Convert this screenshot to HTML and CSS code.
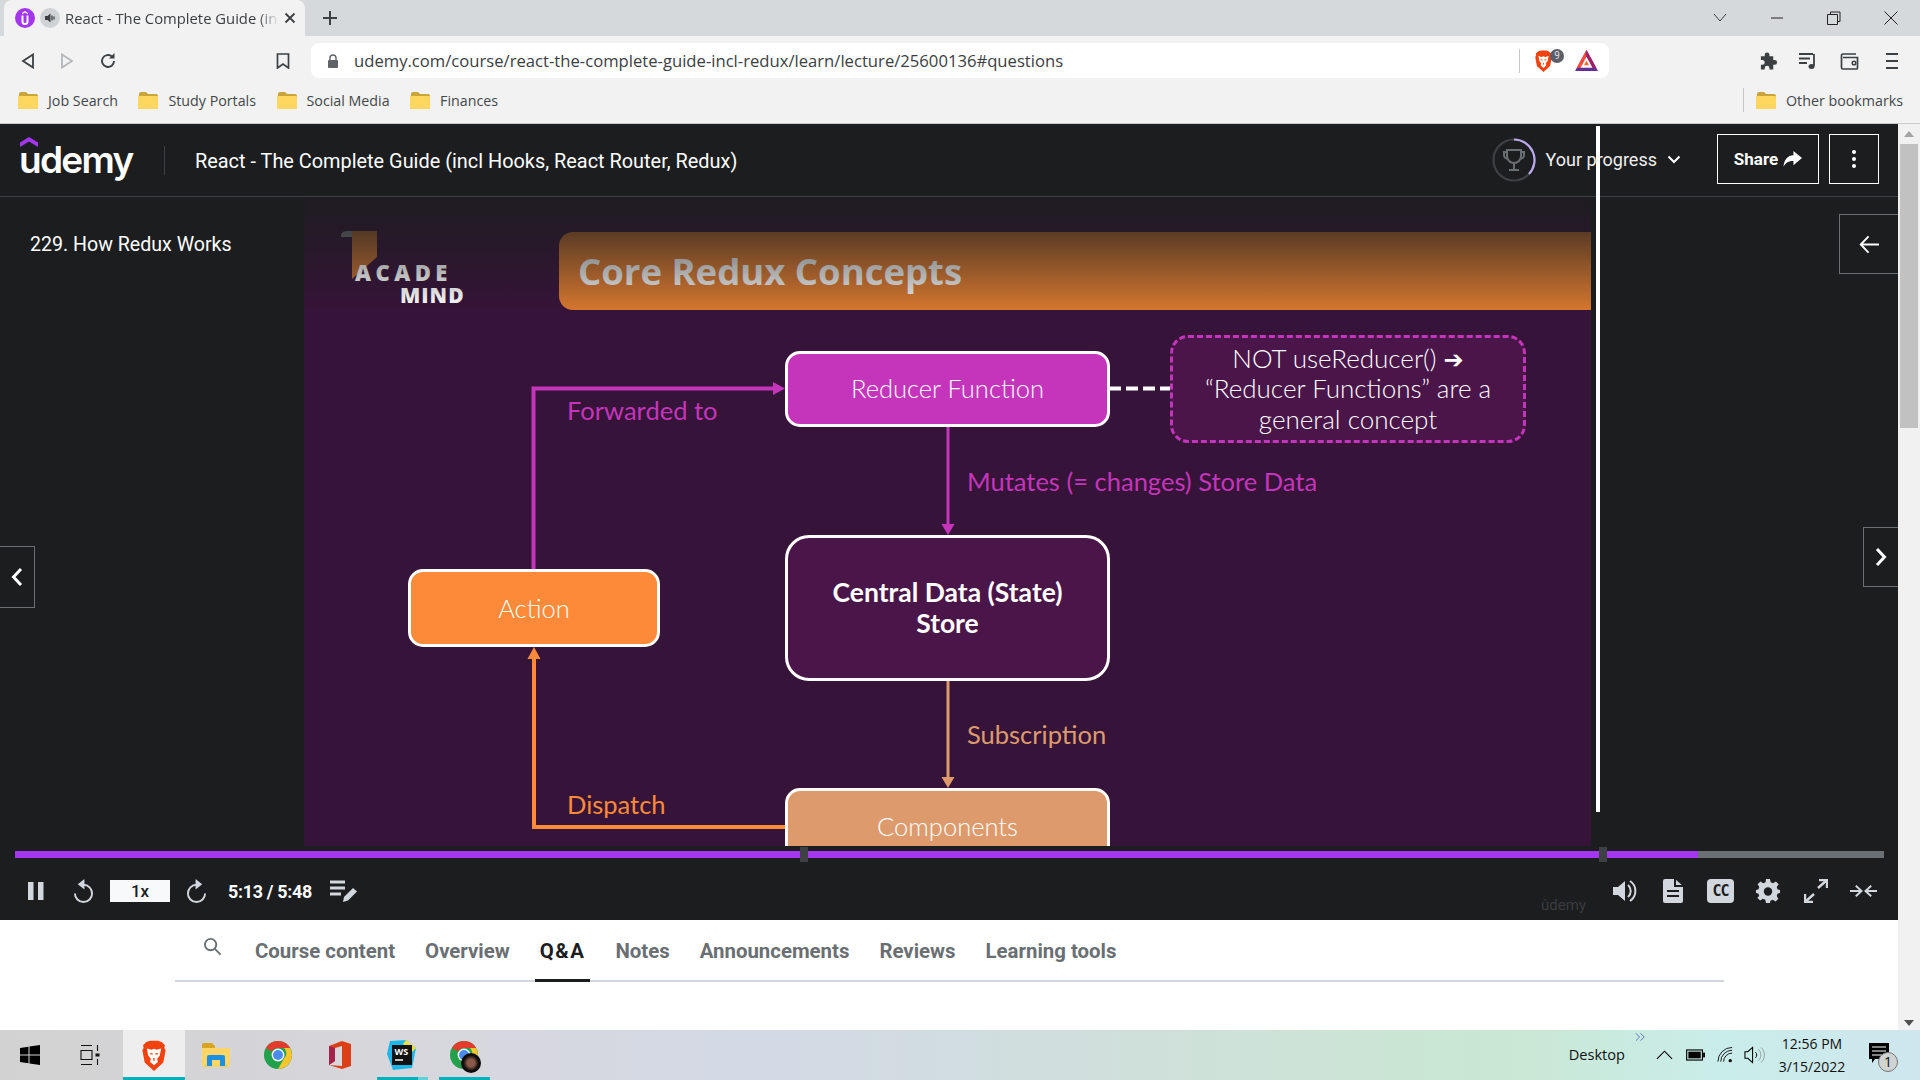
FILE: index.html
```html
<!DOCTYPE html>
<html lang="en">
<head>
<meta charset="utf-8">
<title>React - The Complete Guide</title>
<link rel="stylesheet" href="styles.css">
</head>
<body>
<div class="app">
  <div class="tabstrip">
    <div class="tab">
      <span class="favicon"><svg viewBox="0 0 20 20" width="20" height="20"><circle cx="10" cy="10" r="10" fill="#a435f0"/><path d="M6.500 7.500v6a3.500 3.500 0 0 0 7 0v-6h-2v6a1.500 1.500 0 0 1-3 0v-6z" fill="#fff"/><path d="M10 3l3 2v1.400l-3-2-3 2V5z" fill="#fff"/></svg></span>
      <span class="tabaudio"><svg viewBox="0 0 20 20" width="20" height="20"><circle cx="10" cy="10" r="10" fill="#d0d3d6"/><path d="M5 8h2.500L10.500 5.500v9L7.500 12H5z" fill="#3c4043"/><path d="M12 7.500v5M14 8.500v3" stroke="#3c4043" stroke-width="1.300"/></svg></span>
      <span class="tabtitle">React - The Complete Guide (in</span>
      <svg class="tabclose" viewBox="0 0 12 12" width="12" height="12"><path d="M1.500 1.500l9 9M10.500 1.500l-9 9" stroke="#3c4043" stroke-width="1.800"/></svg>
    </div>
    <svg class="newtab" viewBox="0 0 16 16" width="16" height="16"><path d="M8 1v14M1 8h14" stroke="#3c4043" stroke-width="2"/></svg>
    <div class="winctl">
      <svg viewBox="0 0 14 10" width="14" height="10"><path d="M1 1l6 7 6-7" fill="none" stroke="#3c4043"/></svg>
      <svg viewBox="0 0 14 10" width="14" height="10"><path d="M1 5h12" stroke="#222" stroke-width="1"/></svg>
      <svg viewBox="0 0 14 14" width="14" height="14"><path d="M3.500 3.500V1h9.500v9.500h-2.500M.5 3.500h10v10H.5z" fill="none" stroke="#222"/></svg>
      <svg viewBox="0 0 14 14" width="14" height="14"><path d="M.5.5l13 13M13.500.5l-13 13" stroke="#222"/></svg>
    </div>
  </div>

  <div class="toolbar">
    <div class="navbtns">
      <svg viewBox="0 0 14 16" width="14" height="16"><path d="M12 1.500v13L2 8z" fill="none" stroke="#3c4043" stroke-width="1.800"/></svg>
      <svg viewBox="0 0 14 16" width="14" height="16"><path d="M2 1.500v13L12 8z" fill="none" stroke="#b5b8bb" stroke-width="1.800"/></svg>
      <svg viewBox="0 0 18 18" width="18" height="18"><path d="M15 9a6 6 0 1 1-2-4.500" fill="none" stroke="#3c4043" stroke-width="1.900"/><path d="M15.500 1v5.500H10z" fill="#3c4043"/></svg>
    </div>
    <svg class="bookmarkbtn" viewBox="0 0 14 16" width="14" height="16"><path d="M1.500 1h11v14L7 11l-5.500 4z" fill="none" stroke="#3c4043" stroke-width="1.700"/></svg>
    <div class="omnibox">
      <svg class="lock" viewBox="0 0 12 14" width="12" height="14"><path d="M3 6V4a3 3 0 0 1 6 0v2" fill="none" stroke="#5f6368" stroke-width="1.400"/><rect x="1" y="6" width="10" height="8" rx="1" fill="#5f6368"/></svg>
      <span class="url">udemy.com/course/react-the-complete-guide-incl-redux/learn/lecture/25600136#questions</span>
      <span class="omnidiv"></span>
      <span class="shield"><svg viewBox="0 0 20 24" width="19" height="22"><use href="#braveicon"/></svg><span class="shieldcount">9</span></span>
      <svg class="bat" viewBox="0 0 24 22" width="23" height="21"><path d="M12 0l12 22H0z" fill="#662d91"/><path d="M12 0L1.800 18.700h4L12 7z" fill="#ff4a36"/><path d="M12 0l10.200 18.700h-4L12 7z" fill="#9e1f63"/><path d="M12 7l6.200 11.700H5.800z" fill="#fff"/><path d="M12 11l2.600 5H9.400z" fill="#ff6a2f"/></svg>
    </div>
    <div class="exticons">
      <svg viewBox="0 0 20 20" width="19" height="20"><path d="M2 5h4V3.500a2.500 2.500 0 0 1 5 0V5h4v4h1.500a2.500 2.500 0 0 1 0 5H15v5h-4v-1.500a2.500 2.500 0 0 0-5 0V19H2v-5h1.500a2.500 2.500 0 0 0 0-5H2z" fill="#3c4043"/></svg>
      <svg class="ext-queue" viewBox="0 0 20 20" width="20" height="20"><path d="M1 3h14M1 7.500h11M1 12h8" stroke="#3c4043" stroke-width="1.800"/><path d="M16 3v12" stroke="#3c4043" stroke-width="1.800"/><ellipse cx="13.500" cy="15.500" rx="3" ry="2.500" fill="#3c4043"/></svg>
      <svg class="ext-wallet" viewBox="0 0 20 20" width="20" height="20"><path d="M16 3H3a1.500 1.500 0 0 0-1.500 1.500v12A1.500 1.500 0 0 0 3 18h13.500a1 1 0 0 0 1-1V6.500H3" fill="none" stroke="#3c4043" stroke-width="1.700"/><circle cx="14" cy="12" r="1.800" fill="none" stroke="#3c4043" stroke-width="1.500"/></svg>
      <svg class="ext-menu" viewBox="0 0 12 16" width="12" height="16"><path d="M0 1h12M0 8h12M0 15h12" stroke="#3c4043" stroke-width="2"/></svg>
    </div>
  </div>

  <div class="bookmarks">
    <div class="bm"><svg class="folder" viewBox="0 0 20 18" width="20" height="18"><use href="#foldericon"/></svg>Job Search</div>
    <div class="bm"><svg class="folder" viewBox="0 0 20 18" width="20" height="18"><use href="#foldericon"/></svg>Study Portals</div>
    <div class="bm"><svg class="folder" viewBox="0 0 20 18" width="20" height="18"><use href="#foldericon"/></svg>Social Media</div>
    <div class="bm"><svg class="folder" viewBox="0 0 20 18" width="20" height="18"><use href="#foldericon"/></svg>Finances</div>
    <div class="bm bm-other"><svg class="folder" viewBox="0 0 20 18" width="20" height="18"><use href="#foldericon"/></svg>Other bookmarks</div>
  </div>

  <div class="page">
    <main class="content">
      <section class="player">
        <div class="slide">
          <div class="slide-title">Core Redux Concepts</div>
          <div class="am-logo">
            <svg class="am-ribbon" viewBox="0 0 36 48" width="36" height="48"><path d="M0 6a5 5 0 0 1 5-6h6v6z" fill="#8d8d8f"/><path d="M11 0h25v26L11 48z" fill="#c36f30"/></svg>
            <span class="am-1">ACADE</span>
            <span class="am-2">MIND</span>
          </div>
          <svg class="wires" viewBox="0 0 1287 722" width="1287" height="722">
            <path d="M229.500 446V264.500H472" fill="none" stroke="#c535bb" stroke-width="4"/>
            <path d="M469 258l12 6.500-12 6.500z" fill="#c535bb"/>
            <path d="M644 303v100" stroke="#c535bb" stroke-width="3"/>
            <path d="M637.500 400h13L644 411z" fill="#c535bb"/>
            <path d="M644 557v100" stroke="#dd9b6d" stroke-width="3"/>
            <path d="M637.500 653h13L644 664z" fill="#dd9b6d"/>
            <path d="M482 703H230V532" fill="none" stroke="#fc8a38" stroke-width="4"/>
            <path d="M223.500 535h13L230 523z" fill="#fc8a38"/>
            <path d="M805 264.500h62" stroke="#fff" stroke-width="4" stroke-dasharray="12 5"/>
          </svg>
          <div class="node node-reducer">Reducer Function</div>
          <div class="note">NOT useReducer() <span class="note-arrow">➔</span><br>“Reducer Functions” are a<br>general concept</div>
          <div class="edge edge-forward">Forwarded to</div>
          <div class="edge edge-mutates">Mutates (= changes) Store Data</div>
          <div class="node node-action">Action</div>
          <div class="node node-store">Central Data (State)<br>Store</div>
          <div class="edge edge-sub">Subscription</div>
          <div class="edge edge-dispatch">Dispatch</div>
          <div class="node node-comp">Components</div>
        </div>
        <div class="slide-shade"></div>
        <div class="cursor-line"></div>

        <header class="course-head">
          <div class="logo"><svg class="logo-mark" viewBox="0 0 18 10" width="18" height="10"><path d="M9 0l9 5.500V10L9 4.500 0 10V5.500z" fill="#a435f0"/></svg><span class="logo-word">udemy</span></div>
          <span class="head-div"></span>
          <div class="course-title">React - The Complete Guide (incl Hooks, React Router, Redux)</div>
          <svg class="ring" viewBox="0 0 44 44" width="44" height="44"><circle cx="22" cy="22" r="20.500" fill="none" stroke="#3e4143" stroke-width="2.200"/><path d="M22 1.500A20.500 20.500 0 0 1 37 36" fill="none" stroke="#b9a9ec" stroke-width="2.200"/><path d="M15 12h14v6a7 7 0 0 1-14 0zM15 14h-3v3a4 4 0 0 0 4 4M29 14h3v3a4 4 0 0 1-4 4M22 25v6M17 32h10" fill="none" stroke="#6a6f73" stroke-width="2"/></svg>
          <div class="progress-label">Your progress</div>
          <svg class="chev" viewBox="0 0 14 9" width="14" height="9"><path d="M1.500 1.500L7 7l5.500-5.500" fill="none" stroke="#fff" stroke-width="2"/></svg>
          <button class="head-btn share">Share <svg viewBox="0 0 20 18" width="19" height="17"><path d="M11 0l9 7.500-9 7.500v-4.500c-5 0-8 1.500-10.500 6C1 10 4 5 11 4.500z" fill="#fff"/></svg></button>
          <button class="head-btn more"><svg viewBox="0 0 4 18" width="4" height="18"><circle cx="2" cy="2" r="2" fill="#fff"/><circle cx="2" cy="9" r="2" fill="#fff"/><circle cx="2" cy="16" r="2" fill="#fff"/></svg></button>
        </header>

        <div class="stage">
          <div class="lecture-name">229. How Redux Works</div>
          <button class="sidebtn back"><svg viewBox="0 0 22 20" width="21" height="19"><path d="M21 10H2M10 1.500L1.800 10l8.200 8.500" fill="none" stroke="#fff" stroke-width="2"/></svg></button>
          <button class="navarrow prev"><svg viewBox="0 0 12 20" width="12" height="20"><path d="M10 2L2.500 10l7.500 8" fill="none" stroke="#fff" stroke-width="3"/></svg></button>
          <button class="navarrow next"><svg viewBox="0 0 12 20" width="12" height="20"><path d="M2 2l7.500 8L2 18" fill="none" stroke="#fff" stroke-width="3"/></svg></button>
        </div>

        <div class="seek">
          <div class="seek-fill"></div>
          <span class="seek-mark mark-a"></span>
          <span class="seek-mark mark-b"></span>
        </div>

        <div class="controls">
          <svg class="ci ci-pause" viewBox="0 0 16 18" width="16" height="18"><path d="M0 0h5.500v18H0zM10 0h5.500v18H10z" fill="#d1d7dc"/></svg>
          <svg class="ci ci-back" viewBox="0 0 22 26" width="21" height="25"><path d="M11 6a9 9 0 1 1-9 9" fill="none" stroke="#d1d7dc" stroke-width="2"/><path d="M12 0v11L5 5.500z" fill="#d1d7dc"/></svg>
          <div class="speed">1x</div>
          <svg class="ci ci-fwd" viewBox="0 0 22 26" width="21" height="25"><path d="M11 6a9 9 0 1 0 9 9" fill="none" stroke="#d1d7dc" stroke-width="2"/><path d="M10 0v11l7-5.500z" fill="#d1d7dc"/></svg>
          <div class="time">5:13 / 5:48</div>
          <svg class="ci ci-notes" viewBox="0 0 28 22" width="28" height="22"><path d="M0 2h15M0 8h15M0 14h11" stroke="#d1d7dc" stroke-width="3"/><path d="M13 22l1-5 9-9 4 3.500-9 9z" fill="#d1d7dc"/></svg>
          <div class="ctl-right">
            <span class="cell"><svg viewBox="0 0 24 24" width="24" height="24"><path d="M0 8h5l7-6v20l-7-6H0z" fill="#d1d7dc"/><path d="M15 6a8 8 0 0 1 0 12M17 2a12 12 0 0 1 0 20" fill="none" stroke="#d1d7dc" stroke-width="2"/></svg></span>
            <span class="cell"><svg viewBox="0 0 20 24" width="20" height="24"><path d="M2 0h10l8 7v15a2 2 0 0 1-2 2H2a2 2 0 0 1-2-2V2a2 2 0 0 1 2-2z" fill="#d1d7dc"/><path d="M12 0v7h8M4 12h12M4 17h12" fill="none" stroke="#1c1d1f" stroke-width="2"/></svg></span>
            <span class="cell"><span class="cc">CC</span></span>
            <span class="cell"><svg viewBox="0 0 24 24" width="24" height="24"><path d="M10 0h4l.7 3.300 2.400 1 2.800-1.800 2.800 2.800L20.700 8l1 2.400L24 11v3l-2.300.6-1 2.400 1.700 2.700-2.800 2.800-2.800-1.800-2.400 1L14 24h-4l-.7-3.300-2.400-1-2.800 1.800-2.800-2.800L3.300 17l-1-2.400L0 14v-3l2.300-.6 1-2.400-1.700-2.700 2.800-2.800 2.800 1.800 2.400-1z" fill="#d1d7dc"/><circle cx="12" cy="12.500" r="4.200" fill="#1c1d1f"/></svg></span>
            <span class="cell"><svg viewBox="0 0 24 24" width="24" height="24"><path d="M14 9l9-8M15 1h8v8M10 15l-9 8M1 15v8h8" fill="none" stroke="#d1d7dc" stroke-width="2.400"/></svg></span>
            <span class="cell"><svg viewBox="0 0 28 14" width="27" height="14"><path d="M0 7h11M6 1.500L12 7l-6 5.500M28 7H17M22 1.500L16 7l6 5.500" fill="none" stroke="#d1d7dc" stroke-width="2"/></svg></span>
          </div>
        </div>
        <div class="watermark">ûdemy</div>
      </section>

      <nav class="lecture-tabs">
        <svg class="tab-search" viewBox="0 0 20 20" width="19" height="19"><circle cx="8" cy="8" r="6" fill="none" stroke="#6a6f73" stroke-width="2"/><path d="M12.500 12.500l6 6" stroke="#6a6f73" stroke-width="2"/></svg>
        <a class="lt">Course content</a>
        <a class="lt">Overview</a>
        <a class="lt lt-active">Q&amp;A</a>
        <a class="lt">Notes</a>
        <a class="lt">Announcements</a>
        <a class="lt">Reviews</a>
        <a class="lt">Learning tools</a>
      </nav>
    </main>
    <aside class="scrollbar">
      <svg viewBox="0 0 10 6" width="10" height="6"><path d="M5 0l5 6H0z" fill="#a3a3a3"/></svg>
      <div class="thumb"></div>
      <svg class="scroll-down" viewBox="0 0 10 6" width="10" height="6"><path d="M0 0h10L5 6z" fill="#505050"/></svg>
    </aside>
  </div>

  <footer class="taskbar">
    <svg class="tb-win" viewBox="0 0 20 20" width="20" height="20"><path d="M0 3l8.500-1.200v7.700H0zM9.500 1.600L20 0v9.500H9.500zM0 10.500h8.500v7.700L0 17zM9.500 10.500H20V20L9.500 18.400z" fill="#000"/></svg>
    <svg class="tb-view" viewBox="0 0 20 20" width="20" height="20"><path d="M1 .5h11M1 19.500h11M1 5.500h11v9H1zM17.500 0v6M17.500 14v6" fill="none" stroke="#111" stroke-width="1.100"/><rect x="15.500" y="8.500" width="4" height="3" fill="#111"/></svg>
    <div class="tb-app tb-active"><svg viewBox="0 0 20 24" width="26" height="31"><use href="#braveicon"/></svg></div>
    <div class="tb-app"><svg viewBox="0 0 28 24" width="28" height="24"><path d="M0 2a2 2 0 0 1 2-2h8l3 3v2H0z" fill="#d9a520"/><path d="M0 5h28v18a1 1 0 0 1-1 1H1a1 1 0 0 1-1-1z" fill="#fbd567"/><path d="M5 23v-9a2 2 0 0 1 2-2h14a2 2 0 0 1 2 2v9h-5v-6h-8v6z" fill="#1c8fe0"/></svg></div>
    <div class="tb-app"><svg class="chrome" viewBox="0 0 28 28" width="28" height="28"><use href="#chromeicon"/></svg></div>
    <div class="tb-app"><svg viewBox="0 0 24 28" width="24" height="28"><path d="M14 0l9 3v22l-9 3-13-4 13 1V5L7 7v13l-6 4V5z" fill="#dc3e15"/><path d="M1 5l6 2v13l-6 4z" fill="#a6224e"/></svg></div>
    <div class="tb-app tb-ws"><svg viewBox="0 0 30 30" width="30" height="30"><path d="M3 1l16-1 10 8-4 20-19 2L0 14z" fill="#1db6e8"/><path d="M19 0l10 8-5 5-8-9z" fill="#f5e13d"/><rect x="5" y="5" width="20" height="20" fill="#111"/><path d="M8 20h8" stroke="#fff" stroke-width="1.500"/><text x="7.500" y="15" class="ws-text">WS</text></svg></div>
    <div class="tb-app tb-chrome2"><svg class="chrome" viewBox="0 0 28 28" width="28" height="28"><use href="#chromeicon"/></svg><span class="avatar"></span></div>
    <span class="tb-spacer"></span>
    <span class="tb-desktop">Desktop</span>
    <svg class="tb-more" viewBox="0 0 12 10" width="11" height="10"><path d="M1 1l4 4-4 4M6 1l4 4-4 4" fill="none" stroke="#5a68b0"/></svg>
    <svg class="tb-caret" viewBox="0 0 18 10" width="17" height="10"><path d="M1 9l8-8 8 8" fill="none" stroke="#000" stroke-width="1.200"/></svg>
    <svg class="tb-batt" viewBox="0 0 20 12" width="19" height="12"><rect x=".7" y=".7" width="16.600" height="10.600" fill="none" stroke="#000" stroke-width="1.200"/><rect x="2.500" y="2.500" width="13" height="7" fill="#000"/><rect x="18" y="3.500" width="2" height="5" fill="#000"/></svg>
    <svg class="tb-wifi" viewBox="0 0 18 18" width="17" height="18"><path d="M1 16A15 15 0 0 1 16 1M4 16A12 12 0 0 1 16 4M7 16a9 9 0 0 1 9-9" fill="none" stroke="#111" stroke-width="1"/><circle cx="14" cy="15" r="1.800" fill="#111"/></svg>
    <svg class="tb-vol" viewBox="0 0 22 20" width="21" height="20"><path d="M1 6.500h3L9 2v16l-5-4.500H1z" fill="none" stroke="#000" stroke-width="1.100"/><path d="M12 7a4 4 0 0 1 0 6" fill="none" stroke="#000"/><path d="M15 4a8 8 0 0 1 0 12M18 2a11 11 0 0 1 0 16" fill="none" stroke="#9aa09e"/></svg>
    <div class="tb-clock"><span>12:56 PM</span><span>3/15/2022</span></div>
    <div class="tb-notif"><svg viewBox="0 0 20 20" width="20" height="20"><path d="M0 0h20v16H6l-3 4v-4H0z" fill="#000"/><path d="M3 4h14M3 8h14M3 12h10" stroke="#fff" stroke-width="1.200"/></svg><span class="tb-badge">1</span></div>
  </footer>
</div>

<svg class="defs" width="0" height="0">
  <defs>
    <g id="foldericon">
      <path d="M1 3a2 2 0 0 1 2-2h5l2 2h8a2 2 0 0 1 2 2v11a2 2 0 0 1-2 2H2a2 2 0 0 1-2-2z" fill="#c9a43d"/>
      <path d="M0 6a1 1 0 0 1 1-1h18a1 1 0 0 1 1 1v10a2 2 0 0 1-2 2H2a2 2 0 0 1-2-2z" fill="#ffd75f"/>
    </g>
    <g id="braveicon">
      <path d="M4 1.500L7 .5h6l3 1 2.500 2.500-.5 2 1 2-1.800 9.500L10 24l-7.200-6.500L1 8l1-2-.5-2z" fill="#f4420e"/>
      <path d="M4.500 6.500L8 7.500l2-.8 2 .8 3.500-1-1 5.500-2 2.500.5 2.500-3 2.500-3-2.500.5-2.500-2-2.500z" fill="#fff"/>
      <path d="M7 10.500l2 .5M13 10.500l-2 .5M10 14v2" stroke="#f4420e" stroke-width="1"/>
    </g>
    <g id="chromeicon">
      <circle cx="14" cy="14" r="14" fill="#22a04c"/>
      <path d="M14 0a14 14 0 0 1 12.100 7H14a7 7 0 0 0-6.100 3.500L1.900 7A14 14 0 0 1 14 0z" fill="#e33b2e"/>
      <path d="M26.100 7A14 14 0 0 1 14 28l6-10.500A7 7 0 0 0 20 7z" fill="#fbc52c"/>
      <circle cx="14" cy="14" r="6.400" fill="#fff"/>
      <circle cx="14" cy="14" r="5" fill="#4b8bf0"/>
    </g>
  </defs>
</svg>
</body>
</html>
```

FILE: styles.css
```css
* { box-sizing: border-box; }
html, body { margin: 0; padding: 0; width: 1920px; height: 1080px; overflow: hidden; }
body { font-family: "Roboto", "Liberation Sans", sans-serif; background: #fff; color: #1c1d1f; }
button { font: inherit; padding: 0; background: none; }
svg { display: block; flex: none; }
.defs { position: absolute; }
.app { display: flex; flex-direction: column; width: 1920px; height: 1080px; }

/* browser chrome */
.tabstrip { flex: none; height: 36px; background: #d5d9dc; display: flex; align-items: center; padding-left: 4px; }
.tab { width: 301px; height: 36px; background: #f2f2f2; border-radius: 8px 8px 0 0; display: flex; align-items: center; padding-left: 11px; }
.tabaudio { margin-left: 5px; }
.tabtitle { flex: none; margin-left: 5px; width: 214px; white-space: nowrap; font-size: 14.800px; color: #3c4043; font-family: "Open Sans", sans-serif; -webkit-mask-image: linear-gradient(to right, #000 90%, transparent 100%); mask-image: linear-gradient(to right, #000 90%, transparent 100%); }
.tabclose { margin-left: 5px; }
.newtab { margin-left: 17px; }
.winctl { margin-left: auto; display: flex; align-items: center; gap: 43px; padding-right: 22px; }

.toolbar { flex: none; height: 49px; background: #f2f2f2; display: flex; align-items: center; padding-left: 21px; }
.navbtns { display: flex; align-items: center; gap: 25px; }
.bookmarkbtn { margin-left: 159px; }
.omnibox { margin-left: 21px; width: 1298px; height: 35px; background: #fff; border-radius: 8px; display: flex; align-items: center; padding-left: 16px; }
.url { flex: none; margin-left: 15px; font-family: "Open Sans", sans-serif; font-size: 16.650px; color: #3c4043; white-space: nowrap; width: 1165px; }
.omnidiv { width: 1px; height: 24px; background: #c4c7c9; }
.shield { position: relative; margin-left: 14px; display: block; }
.shieldcount { position: absolute; left: 16px; top: -1px; width: 14px; height: 14px; border-radius: 50%; background: #5d5f6b; color: #ddd; font-size: 10px; text-align: center; line-height: 14px; }
.bat { margin-left: 22px; }
.exticons { margin-left: auto; display: flex; align-items: center; padding-right: 22px; }
.ext-queue { margin-left: 20px; }
.ext-wallet { margin-left: 22px; }
.ext-menu { margin-left: 26px; }

.bookmarks { flex: none; height: 39px; background: #f2f2f2; border-bottom: 1px solid #c9cbcd; display: flex; align-items: center; padding: 0 0 8px 18px; gap: 20.500px; font-family: "Open Sans", sans-serif; font-size: 14.250px; color: #44474a; }
.bm { display: flex; align-items: center; gap: 10px; white-space: nowrap; }
.bm-other { margin-left: auto; border-left: 1px solid #c4c7c9; padding-left: 12px; height: 24px; margin-right: 17px; }

/* page */
.page { flex: 1; min-height: 0; display: flex; }
.content { width: 1898px; display: flex; flex-direction: column; background: #fff; }
.scrollbar { width: 22px; background: #f1f1f1; display: flex; flex-direction: column; align-items: center; padding-top: 7px; }
.thumb { width: 18px; height: 284px; background: #c1c1c1; margin-top: 7px; }
.scroll-down { margin-top: auto; margin-bottom: 4px; }

/* player */
.player { position: relative; flex: none; height: 796px; background: #1c1d1f; display: flex; flex-direction: column; overflow: hidden; color: #fff; font-family: "Roboto", sans-serif; }
.slide { position: absolute; left: 304px; top: 0; width: 1287px; height: 722px; background: #361338; font-family: "Lato", sans-serif; font-weight: 300; overflow: hidden; }
.slide-title { position: absolute; left: 255px; top: 108px; width: 1040px; height: 78px; border-radius: 14px 0 0 14px; background: #d4762f; color: #eee; font: 700 36.500px/78px "Open Sans", sans-serif; padding-left: 19px; }
.am-logo { position: absolute; left: 37px; top: 107px; width: 130px; height: 76px; font-family: "Open Sans", sans-serif; font-weight: 800; color: #fff; }
.am-ribbon { position: absolute; left: 0; top: 0; }
.am-1 { position: absolute; left: 14px; top: 31px; font-size: 22px; letter-spacing: 4.500px; line-height: 21px; }
.am-2 { position: absolute; left: 59px; top: 54px; font-size: 21px; letter-spacing: 1px; line-height: 21px; }
.wires { position: absolute; left: 0; top: 0; }
.node { position: absolute; display: flex; align-items: center; justify-content: center; text-align: center; border: 3px solid #fff; border-radius: 15px; color: #fff; font-size: 25.500px; line-height: 31px; }
.node-reducer { left: 481px; top: 227px; width: 325px; height: 76px; padding-bottom: 1px; background: #c535bb; }
.node-action { left: 104px; top: 445px; width: 252px; height: 78px; background: #fc8a38; }
.node-store { left: 481px; top: 411px; width: 325px; height: 146px; background: #4a1649; font-weight: 700; font-size: 26.500px; border-radius: 24px; }
.node-comp { left: 481px; top: 664px; width: 325px; height: 90px; background: #dd9b6d; align-items: flex-start; padding-top: 20px; }
.note { position: absolute; left: 866px; top: 211px; width: 356px; height: 108px; background: #4a1649; border: 3px dashed #c535bb; border-radius: 18px; color: #fff; font-size: 26px; line-height: 30.500px; text-align: center; padding-top: 4.500px; }
.note-arrow { font-family: "DejaVu Sans", sans-serif; font-size: 24px; line-height: 0; font-weight: 700; }
.edge { position: absolute; font-size: 25.500px; line-height: 32px; white-space: nowrap; font-weight: 400; }
.edge-forward { left: 263px; top: 270px; color: #c535bb; }
.edge-mutates { left: 663px; top: 341px; color: #c535bb; }
.edge-sub { left: 663px; top: 594px; color: #dd9b6d; }
.edge-dispatch { left: 263px; top: 664px; color: #fc8a38; }

.slide-shade { position: absolute; left: 304px; top: 0; width: 1287px; height: 796px; background:
  linear-gradient(to bottom, rgba(28,29,31,0) 736px, rgba(28,29,31,.95) 796px),
  linear-gradient(to bottom, #1c1d1f 0, rgba(28,29,31,.92) 72px, rgba(28,29,31,.66) 108px, rgba(28,29,31,0) 186px); pointer-events: none; }
.slide-shade::before { content: ""; position: absolute; left: 0; right: 0; top: 722px; height: 74px; background: #361338; z-index: -1; }
.cursor-line { position: absolute; left: 1596px; top: 2px; width: 4px; height: 686px; background: #fff; z-index: 3; }

.course-head { position: relative; flex: none; height: 73px; display: flex; align-items: center; padding-left: 20px; border-bottom: 1px solid #3e4143; background: #1c1d1f; z-index: 1; }
.logo { position: relative; width: 113px; height: 52px; }
.logo-mark { position: absolute; left: 0; top: 3px; }
.logo-word { position: absolute; left: -1px; top: 0; font: 600 37px/52px "Inter", "Open Sans", sans-serif; letter-spacing: -1.700px; color: #fff; }
.head-div { width: 1px; height: 29px; background: #3e4143; margin-left: 31px; }
.course-title { margin: 2px 0 0 30px; font-size: 19.900px; white-space: nowrap; font-weight: 400; }
.ring { margin-left: auto; }
.progress-label { margin: -2px 0 0 10px; font-size: 18px; color: #f0f0f0; }
.chev { margin: -2px 0 0 10px; }
.head-btn { height: 50px; margin-top: -2px; border: 1.500px solid #fff; color: #fff; display: flex; align-items: center; justify-content: center; font-weight: 700; font-size: 17px; }
.share { width: 102px; margin-left: 36px; gap: 5px; }
.more { width: 50px; margin-left: 10px; margin-right: 19px; }

.stage { position: relative; flex: 1; min-height: 0; }
.lecture-name { padding: 36px 0 0 30px; font-size: 19.600px; position: relative; z-index: 1; }
.sidebtn { position: absolute; right: 0; top: 17px; width: 59px; height: 60px; border: 1px solid #6a6f73; border-right: 0; background: #1c1d1f; display: flex; align-items: center; justify-content: center; }
.navarrow { position: absolute; width: 35px; border: 1px solid #6a6f73; background: #1c1d1f; display: flex; align-items: center; justify-content: center; z-index: 1; }
.prev { left: 0; top: 349px; height: 62px; border-left: 0; }
.next { right: 0; top: 330px; height: 60px; border-right: 0; }

.seek { position: relative; flex: none; margin: 0 14px 0 15px; height: 7px; background: #6a6f73; }
.seek-fill { width: 1683px; height: 7px; background: #a435f0; }
.seek-mark { position: absolute; top: -4px; width: 8px; height: 15px; background: #3e4143; }
.mark-a { left: 785px; }
.mark-b { left: 1584px; }

.controls { position: relative; flex: none; height: 62px; padding: 4px 11px 0 28px; display: flex; align-items: center; }
.ci { flex: none; }
.ci-back { margin-left: 29px; }
.speed { width: 60px; height: 22px; margin-left: 16px; background: #f7f9fa; color: #1c1d1f; text-align: center; font-weight: 500; font-size: 17px; line-height: 23px; }
.ci-fwd { margin-left: 16px; }
.time { margin-left: 21px; font-weight: 700; font-size: 17.900px; white-space: nowrap; letter-spacing: -.3px; }
.ci-notes { margin-left: 18px; }
.ctl-right { margin-left: auto; display: flex; align-items: center; }
.cell { width: 47.600px; display: flex; align-items: center; justify-content: center; }
.cc { display: block; width: 27px; height: 24px; border-radius: 4px; background: #d1d7dc; color: #1c1d1f; font: 700 15px/24px "DejaVu Sans Mono", monospace; letter-spacing: -1px; text-align: center; }
.watermark { position: absolute; right: 312px; bottom: 6px; font-size: 15px; color: #3a3b3f; z-index: 2; }

/* lecture tabs */
.lecture-tabs { margin: 0 174px 0 175px; height: 62px; border-bottom: 2px solid #d1d7dc; display: flex; align-items: stretch; font-weight: 700; font-size: 20.400px; color: #6a6f73; }
.tab-search { align-self: center; margin: -8px 0 0 28px; }
.lt { display: flex; align-items: center; padding: 0 5px 0; margin-left: 20px; white-space: nowrap; height: 62px; }
.tab-search + .lt { margin-left: 28px; }
.lt-active { color: #1c1d1f; letter-spacing: 1.500px; box-shadow: inset 0 -3px 0 #1c1d1f; }

/* taskbar */
.taskbar { flex: none; height: 50px; display: flex; align-items: center; background: linear-gradient(to right, #d2d2d2 0, #d7d7de 25%, #d3dae6 40%, #cfe0da 60%, #c9e7d3 78%, #c9edea 90%, #cfe6ee 100%); font-family: "Open Sans", sans-serif; font-size: 14.600px; color: #111; }
.tb-win { margin-left: 20px; }
.tb-view { margin-left: 40px; }
.tb-app { position: relative; flex: none; width: 62px; height: 50px; display: flex; align-items: center; justify-content: center; }
.tb-active { margin-left: 23px; background: #eeeeee; box-shadow: inset 0 -3px 0 #00b0ba; }
.tb-ws::after { content: ""; position: absolute; left: 6px; bottom: 0; width: 51px; height: 3px; background: linear-gradient(to right, #00b0ba 41px, #5ed3d6 41px); }
.ws-text { font: 700 9px "Open Sans", sans-serif; fill: #fff; }
.tb-chrome2::after { content: ""; position: absolute; left: 6px; bottom: 0; width: 51px; height: 3px; background: #00b0ba; }
.avatar { position: absolute; left: 28px; top: 23px; width: 20px; height: 20px; border-radius: 50%; background: radial-gradient(circle, #8d5a4a 25%, #0b0b0b 55%); }
.tb-spacer { flex: 1; }
.tb-desktop { margin: -2px 10px 0 0; }
.tb-more { margin: -36px 10px 0 0; }
.tb-caret { margin-right: 13px; }
.tb-batt { margin-right: 12px; }
.tb-wifi { margin-right: 10px; }
.tb-vol { margin-right: 12px; }
.tb-clock { display: flex; flex-direction: column; align-items: center; gap: 4px; width: 70px; font-size: 14px; line-height: 19px; }
.tb-notif { position: relative; margin: -4px 31px 0 22px; }
.tb-badge { position: absolute; left: 9px; top: 9px; width: 20px; height: 20px; border-radius: 50%; background: #cfd3d1; border: 1px solid #777; font-size: 14px; line-height: 18px; text-align: center; }
```
